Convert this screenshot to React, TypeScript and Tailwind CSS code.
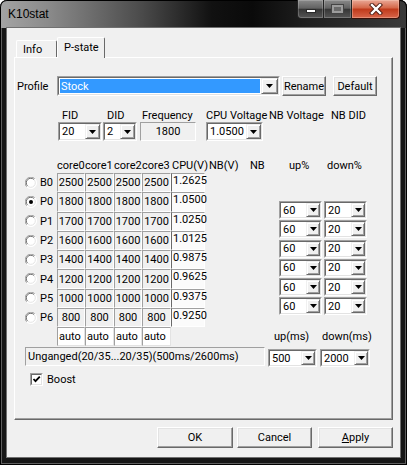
import React from "react";

function Arrow() {
  return (
    <svg width="7" height="4" viewBox="0 0 7 4">
      <path d="M0 0H7L3.5 4Z" fill="#000" />
    </svg>
  );
}

function Combo({
  cls,
  value,
  selected = false,
  btn = "w-[15px]",
}: {
  cls: string;
  value: string;
  selected?: boolean;
  btn?: string;
}) {
  return (
    <div
      className={`flex shrink-0 border border-t-[#a0a0a0] border-l-[#a0a0a0] border-r-white border-b-white ${cls}`}
    >
      <div className="flex flex-1 min-w-0 border border-t-[#696969] border-l-[#696969] border-r-[#e3e3e3] border-b-[#e3e3e3] bg-white">
        <div className="flex flex-1 min-w-0 items-center p-[1px]">
          {selected ? (
            <div className="flex h-full w-full items-center bg-[#3399ff] pl-[1px] text-white">
              {value}
            </div>
          ) : (
            <span className="pl-[1px]">{value}</span>
          )}
        </div>
        <div
          className={`flex shrink-0 items-center justify-center bg-[#f0f0f0] border border-t-[#f0f0f0] border-l-[#f0f0f0] border-r-[#696969] border-b-[#696969] shadow-[inset_1px_1px_0_#fff,inset_-1px_-1px_0_#a0a0a0] ${btn}`}
        >
          <Arrow />
        </div>
      </div>
    </div>
  );
}

function Btn({ cls, children }: { cls: string; children: React.ReactNode }) {
  return (
    <div
      className={`flex shrink-0 items-center justify-center bg-[#f0f0f0] border border-t-white border-l-white border-r-[#696969] border-b-[#696969] shadow-[inset_-1px_-1px_0_#a0a0a0,inset_1px_1px_0_#e3e3e3] ${cls}`}
    >
      {children}
    </div>
  );
}

function Radio({ on }: { on: boolean }) {
  return (
    <svg width="12" height="12" viewBox="0 0 12 12" className="shrink-0">
      <circle cx="6" cy="6" r="5.5" fill="#fff" />
      <path d="M1.8 9.9A5.5 5.5 0 0 1 9.9 1.8" stroke="#a0a0a0" strokeWidth="1" fill="none" />
      <path d="M2.6 9A4.5 4.5 0 0 1 9 2.6" stroke="#696969" strokeWidth="1" fill="none" />
      <path d="M9.9 1.8A5.5 5.5 0 0 1 1.8 9.9" stroke="#fff" strokeWidth="1" fill="none" />
      <path d="M9 2.6A4.5 4.5 0 0 1 2.6 9" stroke="#e3e3e3" strokeWidth="1" fill="none" />
      {on && <circle cx="6" cy="6" r="2" fill="#000" />}
    </svg>
  );
}

const coreW = ["w-[28px]", "w-[29px]", "w-[28px]", "w-[29px]"];

const rows: [string, string, string][] = [
  ["B0", "2500", "1.2625"],
  ["P0", "1800", "1.0500"],
  ["P1", "1700", "1.0250"],
  ["P2", "1600", "1.0125"],
  ["P3", "1400", "0.9875"],
  ["P4", "1200", "0.9625"],
  ["P5", "1000", "0.9375"],
  ["P6", "800", "0.9250"],
];

export default function App() {
  return (
    <div className="w-[407px] h-[465px] bg-white">
      <div className="relative flex h-[465px] w-[407px] flex-col overflow-hidden rounded-t-[7px] bg-[#161616] shadow-[inset_0_0_0_1px_#000,inset_0_0_0_2px_#5e5e5e] font-['Roboto','Liberation_Sans',Arial,sans-serif] text-[11px] leading-[13px] text-black">
        {/* title bar */}
        <div className="flex h-[28px] shrink-0 rounded-t-[7px] bg-[linear-gradient(90deg,#a4a4a4_0%,#8a8a8a_12%,#4a4a4a_35%,#111_52%,#0a0a0a_62%,#1e1e1e_75%,#3a3a3a_100%)] shadow-[inset_0_1px_0_#000,inset_1px_0_0_#000,inset_-1px_0_0_#000]">
          <div className="pl-[8px] pt-[7px] text-[12px] leading-[15px] text-black font-['Liberation_Sans',Arial,sans-serif]">K10stat</div>
          <div className="ml-auto mr-[7px] flex h-[19px]">
            <div className="flex w-[27px] items-center justify-center rounded-bl-[4px] border border-t-0 border-[#232323] bg-[linear-gradient(180deg,#8a8a8a,#626262_45%,#363636_52%,#555)] shadow-[inset_0_0_0_1px_rgba(255,255,255,0.2)]">
              <div className="mt-[4px] h-[4px] w-[10px] border border-[#2a2a2a] bg-white" />
            </div>
            <div className="flex w-[28px] items-center justify-center border border-l-0 border-t-0 border-[#232323] bg-[linear-gradient(180deg,#8a8a8a,#626262_45%,#363636_52%,#555)] shadow-[inset_0_0_0_1px_rgba(255,255,255,0.2)]">
              <div className="h-[8px] w-[11px] border-[2px] border-[#9c9c9c] bg-[#6a6a6a] shadow-[0_0_0_1px_#444]" />
            </div>
            <div className="flex w-[48px] items-center justify-center rounded-br-[4px] border border-l-0 border-t-0 border-[#3a1008] bg-[linear-gradient(180deg,#e9a896,#d56a4c_42%,#c03b1c_52%,#d8654a)] shadow-[inset_0_0_0_1px_rgba(255,220,200,0.35)]">
              <svg width="14" height="12" viewBox="0 0 14 12">
                <path d="M3 2L11 10M11 2L3 10" stroke="#4a1a10" strokeWidth="4.2" strokeLinecap="square" />
                <path d="M3 2L11 10M11 2L3 10" stroke="#fff" strokeWidth="2.4" strokeLinecap="square" />
              </svg>
            </div>
          </div>
        </div>

        {/* client */}
        <div className="mx-[7px] flex h-[429px] w-[393px] flex-col bg-[#f0f0f0] shadow-[0_0_0_1px_#707070]">
          {/* tabs */}
          <div className="mt-[9px] flex h-[20px] items-end">
            <div className="ml-[9px] h-[17px] w-[41px] rounded-t-[2px] border-l border-t border-white border-r border-r-[#696969] pl-[6px] pt-[2px]">
              Info
            </div>
            <div className="relative z-10 -mb-px h-[21px] w-[48px] rounded-t-[2px] border-l border-t border-white border-r border-r-[#696969] bg-[#f0f0f0] pl-[6px] pt-[3px]">
              P-state
            </div>
          </div>

          {/* panel */}
          <div className="ml-[7px] flex h-[363px] w-[379px] flex-col border border-t-white border-l-white border-r-[#696969] border-b-[#696969] shadow-[inset_-1px_-1px_0_#a0a0a0]">
            {/* profile row */}
            <div className="mt-[18px] flex h-[20px] items-center">
              <span className="ml-[2px] w-[40px]">Profile</span>
              <Combo cls="w-[223px] h-[20px]" value="Stock" selected btn="w-[17px]" />
              <Btn cls="ml-[2px] w-[44px] h-[20px]">Rename</Btn>
              <Btn cls="ml-[7px] w-[44px] h-[20px]">Default</Btn>
            </div>

            {/* labels */}
            <div className="mt-[13px] flex h-[13px] pl-[47px]">
              <span className="w-[45px]">FID</span>
              <span className="w-[35px]">DID</span>
              <span className="w-[64px]">Frequency</span>
              <span className="w-[63px]">CPU Voltage</span>
              <span className="w-[62px]">NB Voltage</span>
              <span>NB DID</span>
            </div>

            {/* combos */}
            <div className="flex h-[19px] pl-[43px]">
              <Combo cls="w-[44px] h-[19px]" value="20" />
              <Combo cls="ml-[1px] w-[34px] h-[19px]" value="2" />
              <div className="ml-[3px] flex h-[19px] w-[56px] items-center justify-center border border-t-[#a0a0a0] border-l-[#a0a0a0] border-r-white border-b-white bg-[#f0f0f0] pb-[1px]">
                1800
              </div>
              <Combo cls="ml-[10px] w-[57px] h-[19px]" value="1.0500" />
            </div>

            {/* header */}
            <div className="mt-[18px] flex h-[13px] pl-[42px]">
              <span className="w-[28px]">core0</span>
              <span className="w-[29px]">core1</span>
              <span className="w-[28px]">core2</span>
              <span className="w-[29px]">core3</span>
              <span className="ml-[1px] w-[37px]">CPU(V)</span>
              <span className="w-[41px]">NB(V)</span>
              <span className="w-[39px]">NB</span>
              <span className="w-[38px]">up%</span>
              <span>down%</span>
            </div>

            {/* grid */}
            <div className="mt-[1px] flex">
              <div className="flex flex-col">
                {rows.map(([name, f, v]) => (
                  <div key={name} className="flex h-[19.3px]">
                    <div className="flex w-[42px] items-center">
                      <div className="ml-[10px]">
                        <Radio on={name === "P0"} />
                      </div>
                      <span className="ml-[3px]">{name}</span>
                    </div>
                    {coreW.map((w, i) => (
                      <div
                        key={i}
                        className={`flex items-center justify-center border border-t-[#a0a0a0] border-l-[#a0a0a0] border-r-white border-b-white bg-[#f0f0f0] ${w} ${i === 3 ? "border-r-[#696969]" : ""}`}
                      >
                        {f}
                      </div>
                    ))}
                    <div className="flex w-[34px] items-start border border-t-[#a0a0a0] border-l-[#696969] border-r-white border-b-white bg-[#fbfbfb] pl-[1px]">
                      {v}
                    </div>
                  </div>
                ))}
              </div>
              <div className="ml-[74px] mt-[28px] flex flex-col">
                {[0, 1, 2, 3, 4, 5].map((i) => (
                  <div key={i} className="flex h-[19.3px] gap-[2px]">
                    <Combo cls="w-[43px] h-[18px]" value="60" btn="w-[14px]" />
                    <Combo cls="w-[43px] h-[18px]" value="20" btn="w-[14px]" />
                  </div>
                ))}
              </div>
            </div>

            {/* auto row */}
            <div className="flex h-[19px] items-center pl-[42px]">
              {coreW.map((w, i) => (
                <div
                  key={i}
                  className={`flex h-[19px] items-center border border-t-[#a0a0a0] border-l-[#a0a0a0] border-r-[#e3e3e3] border-b-[#e3e3e3] bg-white pl-[1px] ${w}`}
                >
                  auto
                </div>
              ))}
              <span className="ml-[103px] w-[48px]">up(ms)</span>
              <span>down(ms)</span>
            </div>

            {/* unganged row */}
            <div className="mt-[1px] flex h-[20px] items-start pl-[10px]">
              <div className="flex h-[19px] w-[240px] items-center border border-t-[#a0a0a0] border-l-[#a0a0a0] border-r-white border-b-white pl-[2px] whitespace-nowrap overflow-hidden">
                Unganged(20/35...20/35)(500ms/2600ms)
              </div>
              <Combo cls="ml-[3px] mt-[2px] w-[49px] h-[18px]" value="500" btn="w-[14px]" />
              <Combo cls="ml-[3px] mt-[2px] w-[50px] h-[18px]" value="2000" btn="w-[14px]" />
            </div>

            {/* boost */}
            <div className="mt-[6px] flex items-center pl-[15px]">
              <div className="flex h-[13px] w-[13px] items-center justify-center border border-t-[#a0a0a0] border-l-[#a0a0a0] border-r-white border-b-white">
                <div className="flex h-[11px] w-[11px] items-center justify-center border border-t-[#696969] border-l-[#696969] border-r-[#e3e3e3] border-b-[#e3e3e3] bg-white">
                  <svg width="9" height="9" viewBox="0 0 9 9">
                    <path d="M1.5 4L3.5 6.2L7.8 1.6" stroke="#000" strokeWidth="1.8" fill="none" />
                  </svg>
                </div>
              </div>
              <span className="ml-[4px]">Boost</span>
            </div>
          </div>

          {/* buttons */}
          <div className="mt-[7px] flex h-[21px] justify-end pr-[7px]">
            <Btn cls="w-[76px] h-[21px]">OK</Btn>
            <Btn cls="ml-[4px] w-[75px] h-[21px]">Cancel</Btn>
            <Btn cls="ml-[6px] w-[75px] h-[21px]">
              <span>
                <span className="underline">A</span>pply
              </span>
            </Btn>
          </div>
        </div>
      </div>
    </div>
  );
}
